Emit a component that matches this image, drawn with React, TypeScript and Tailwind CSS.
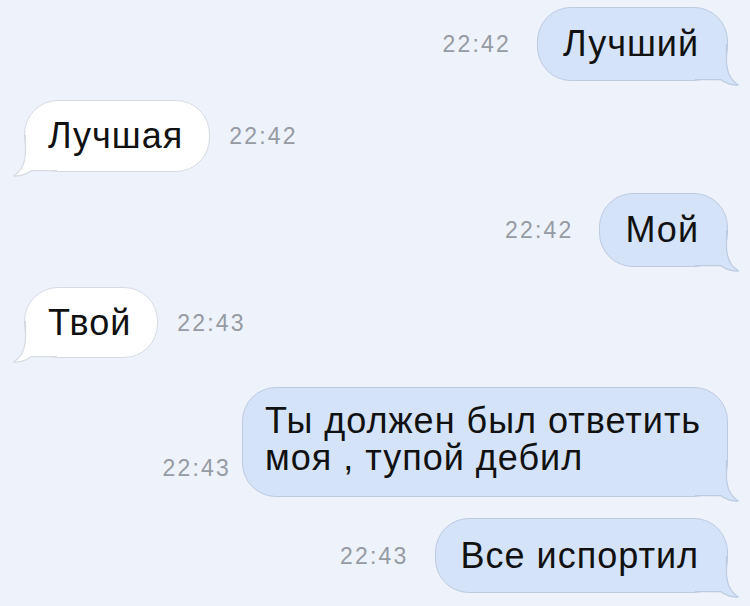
import type { ReactNode } from 'react';

type Side = 'out' | 'in';

const bubbleStyles: Record<Side, { box: string; fill: string; stroke: string }> = {
  out: {
    box: 'bg-[#d4e3f8] border-[#bccbe0]',
    fill: '#d4e3f8',
    stroke: '#bccbe0',
  },
  in: {
    box: 'bg-white border-[#d6dae1]',
    fill: '#ffffff',
    stroke: '#d6dae1',
  },
};

// Curled tail drawn over the bottom corner of a bubble
function Tail({ side }: { side: Side }): JSX.Element {
  const { fill, stroke } = bubbleStyles[side];
  const edge = 'M31.5 0 L31.5 16 C31.5 29 36 36.5 43.5 41 C37 41.5 31 39.5 25.5 35.5 C20 36 12 35.5 0 35.5';
  return (
    <svg
      width="44"
      height="42"
      viewBox="0 0 44 42"
      className={
        side === 'out'
          ? 'pointer-events-none absolute bottom-[-6px] right-[-12px]'
          : 'pointer-events-none absolute bottom-[-6px] left-[-12px] -scale-x-100'
      }
    >
      <path d={`${edge} L0 0 Z`} fill={fill} />
      <path d={edge} fill="none" stroke={stroke} strokeWidth="1.2" />
    </svg>
  );
}

function Bubble({
  side,
  children,
  className = '',
}: {
  side: Side;
  children: ReactNode;
  className?: string;
}): JSX.Element {
  return (
    <div
      className={`relative flex items-center rounded-[34px] border text-[36px] tracking-[1px] text-[#111] ${bubbleStyles[side].box} ${className}`}
    >
      <div className="relative z-10">{children}</div>
      <Tail side={side} />
    </div>
  );
}

function Time({ children, className = '' }: { children: string; className?: string }): JSX.Element {
  return (
    <span className={`text-[23px] leading-[28px] tracking-[2.2px] text-[#959aa3] ${className}`}>
      {children}
    </span>
  );
}

function Outgoing({
  time,
  text,
  height,
  className = '',
}: {
  time: string;
  text: string;
  height: string;
  className?: string;
}): JSX.Element {
  return (
    <div className={`flex items-center justify-end gap-[26px] pr-[22px] ${className}`}>
      <Time>{time}</Time>
      <Bubble side="out" className={`pl-[25px] pr-[28px] leading-[44px] ${height}`}>
        {text}
      </Bubble>
    </div>
  );
}

function Incoming({
  time,
  text,
  height,
  className = '',
}: {
  time: string;
  text: string;
  height: string;
  className?: string;
}): JSX.Element {
  return (
    <div className={`flex items-center gap-[19px] pl-[24px] ${className}`}>
      <Bubble side="in" className={`pl-[23px] pr-[26px] leading-[44px] ${height}`}>
        {text}
      </Bubble>
      <Time>{time}</Time>
    </div>
  );
}

export default function App(): JSX.Element {
  return (
    <div
      className="flex h-[606px] w-[750px] flex-col overflow-hidden bg-[#eef2fb] pt-[7px]"
      style={{ fontFamily: '"Liberation Sans", Arial, sans-serif' }}
    >
      <Outgoing time="22:42" text="Лучший" height="h-[74px]" />
      <Incoming time="22:42" text="Лучшая" height="h-[72px]" className="mt-[19px]" />
      <Outgoing time="22:42" text="Мой" height="h-[74px]" className="mt-[21px]" />
      <Incoming time="22:43" text="Твой" height="h-[71px]" className="mt-[20px]" />

      <div className="mt-[29px] flex justify-end gap-[11px] pr-[22px]">
        <Time className="mb-[15px] self-end">22:43</Time>
        <Bubble side="out" className="h-[110px] w-[486px] rounded-[32px] pb-[6px] pl-[22px] pr-[14px] leading-[37px]">
          <span>
            Ты должен был ответить
            <br />
            моя , тупой дебил
          </span>
        </Bubble>
      </div>

      <Outgoing time="22:43" text="Все испортил" height="h-[75px]" className="mt-[21px]" />
    </div>
  );
}
